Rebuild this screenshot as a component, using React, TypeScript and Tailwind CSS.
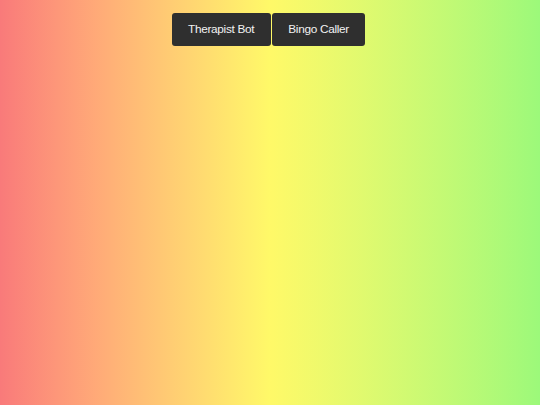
export default function App() {
  return (
    <div className="w-[540px] h-[405px] bg-gradient-to-r from-[#f97a7a] via-[#fff968] to-[#9cf97a] font-['Liberation_Sans',Arial,sans-serif]">
      <div className="flex justify-center gap-[1px] pt-[13px] pr-[3px]">
        <button className="h-[33px] px-[16.5px] rounded-[3px] bg-[#2f2f2f] text-[#f2f2f2] text-[11.8px] tracking-[-0.3px] leading-none">
          Therapist Bot
        </button>
        <button className="h-[33px] px-[16.5px] rounded-[3px] bg-[#2f2f2f] text-[#f2f2f2] text-[11.8px] tracking-[-0.3px] leading-none">
          Bingo Caller
        </button>
      </div>
    </div>
  );
}
